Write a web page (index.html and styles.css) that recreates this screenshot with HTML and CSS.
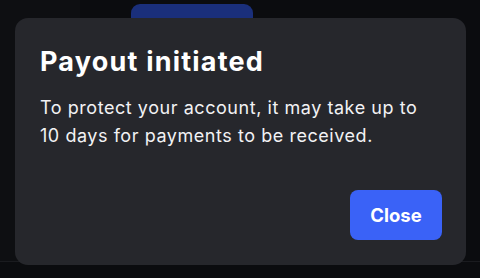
FILE: index.html
```html
<!DOCTYPE html>
<html>
<head>
<meta charset="utf-8">
<link rel="stylesheet" href="styles.css">
</head>
<body>
<div class="backdrop">
  <div class="sidebar"></div>
  <div class="bg-button">Send Payout</div>
  <div class="bg-line"></div>
</div>
<div class="dialog" role="dialog">
  <h1 class="title">Payout initiated</h1>
  <p class="text">To protect your account, it may take up to 10 days for payments to be received.</p>
  <div class="actions">
    <button class="close">Close</button>
  </div>
</div>
</body>
</html>
```
FILE: styles.css
```css
* { box-sizing: border-box; }
html, body { margin: 0; padding: 0; }
body {
  width: 480px;
  height: 278px;
  background: #0b0c0f;
  font-family: Inter, "Noto Sans", sans-serif;
  position: relative;
  overflow: hidden;
}
.backdrop {
  position: absolute;
  inset: 0;
}
.sidebar {
  position: absolute;
  left: 0; top: 0;
  width: 80px; height: 261px;
  background: #0e0f12;
}
.bg-line {
  position: absolute;
  left: 0; top: 261px;
  width: 100%; height: 1px;
  background: #1a1b1f;
}
.bg-button {
  position: absolute;
  left: 131px; top: 4px;
  width: 122px; height: 40px;
  border-radius: 9px;
  background: #1a2f7b;
  color: #3b4f95;
  font-weight: 600;
  font-size: 15px;
  padding: 12px 0 0 15px;
}
.dialog {
  position: absolute;
  left: 15px; top: 18px;
  width: 451px; height: 247px;
  background: #26272c;
  border-radius: 13px;
  padding: 28px 24px 25px 25px;
  display: flex;
  flex-direction: column;
}
.title {
  margin: 0;
  color: #ffffff;
  font-size: 27px;
  font-weight: 700;
  line-height: 32px;
  letter-spacing: 1.2px;
}
.text {
  margin: 16px 0 0;
  color: #f2f2f4;
  font-size: 18px;
  line-height: 28px;
  font-weight: 400;
  letter-spacing: 0.55px;
}
.actions {
  margin-top: auto;
  display: flex;
  justify-content: flex-end;
}
.close {
  width: 92px;
  height: 50px;
  border: 0;
  border-radius: 8px;
  background: #3a62f7;
  color: #ffffff;
  font-family: inherit;
  font-size: 18.5px;
  font-weight: 700;
  letter-spacing: 0;
}
```
